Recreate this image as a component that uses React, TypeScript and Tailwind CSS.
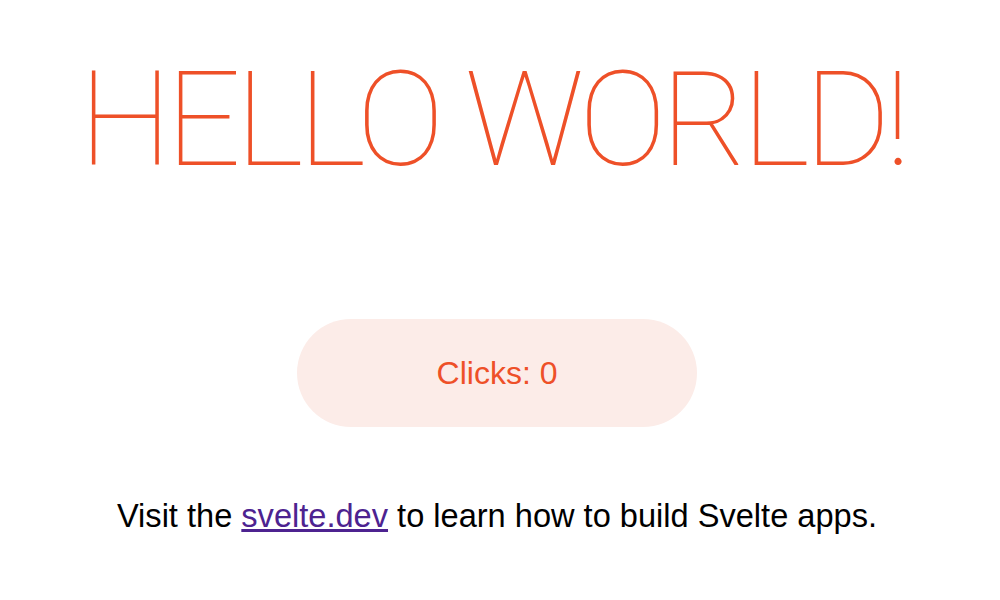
import { useState } from 'react';

export default function App() {
  const [count, setCount] = useState(0);

  return (
    <main className="flex h-[600px] w-[1000px] flex-col items-center bg-white pr-[6px] font-['Liberation_Sans',Arial,sans-serif] text-black">
      <h1 className="mt-[55px] mr-[10px] font-['Roboto',sans-serif] text-[132px] leading-[130px] font-thin tracking-[-5.6px] uppercase text-[#ee5028]">
        Hello world!
      </h1>

      <button
        className="mt-[134px] h-[108px] w-[400px] rounded-full bg-[#fcece8] text-[32px] text-[#ee5028]"
        onClick={() => setCount(count + 1)}
      >
        Clicks: {count}
      </button>

      <p className="mt-[69px] text-[32.6px] leading-[40px]">
        Visit the{' '}
        <a href="#" className="text-[#4d2390] underline">
          svelte.dev
        </a>{' '}
        to learn how to build Svelte apps.
      </p>
    </main>
  );
}
